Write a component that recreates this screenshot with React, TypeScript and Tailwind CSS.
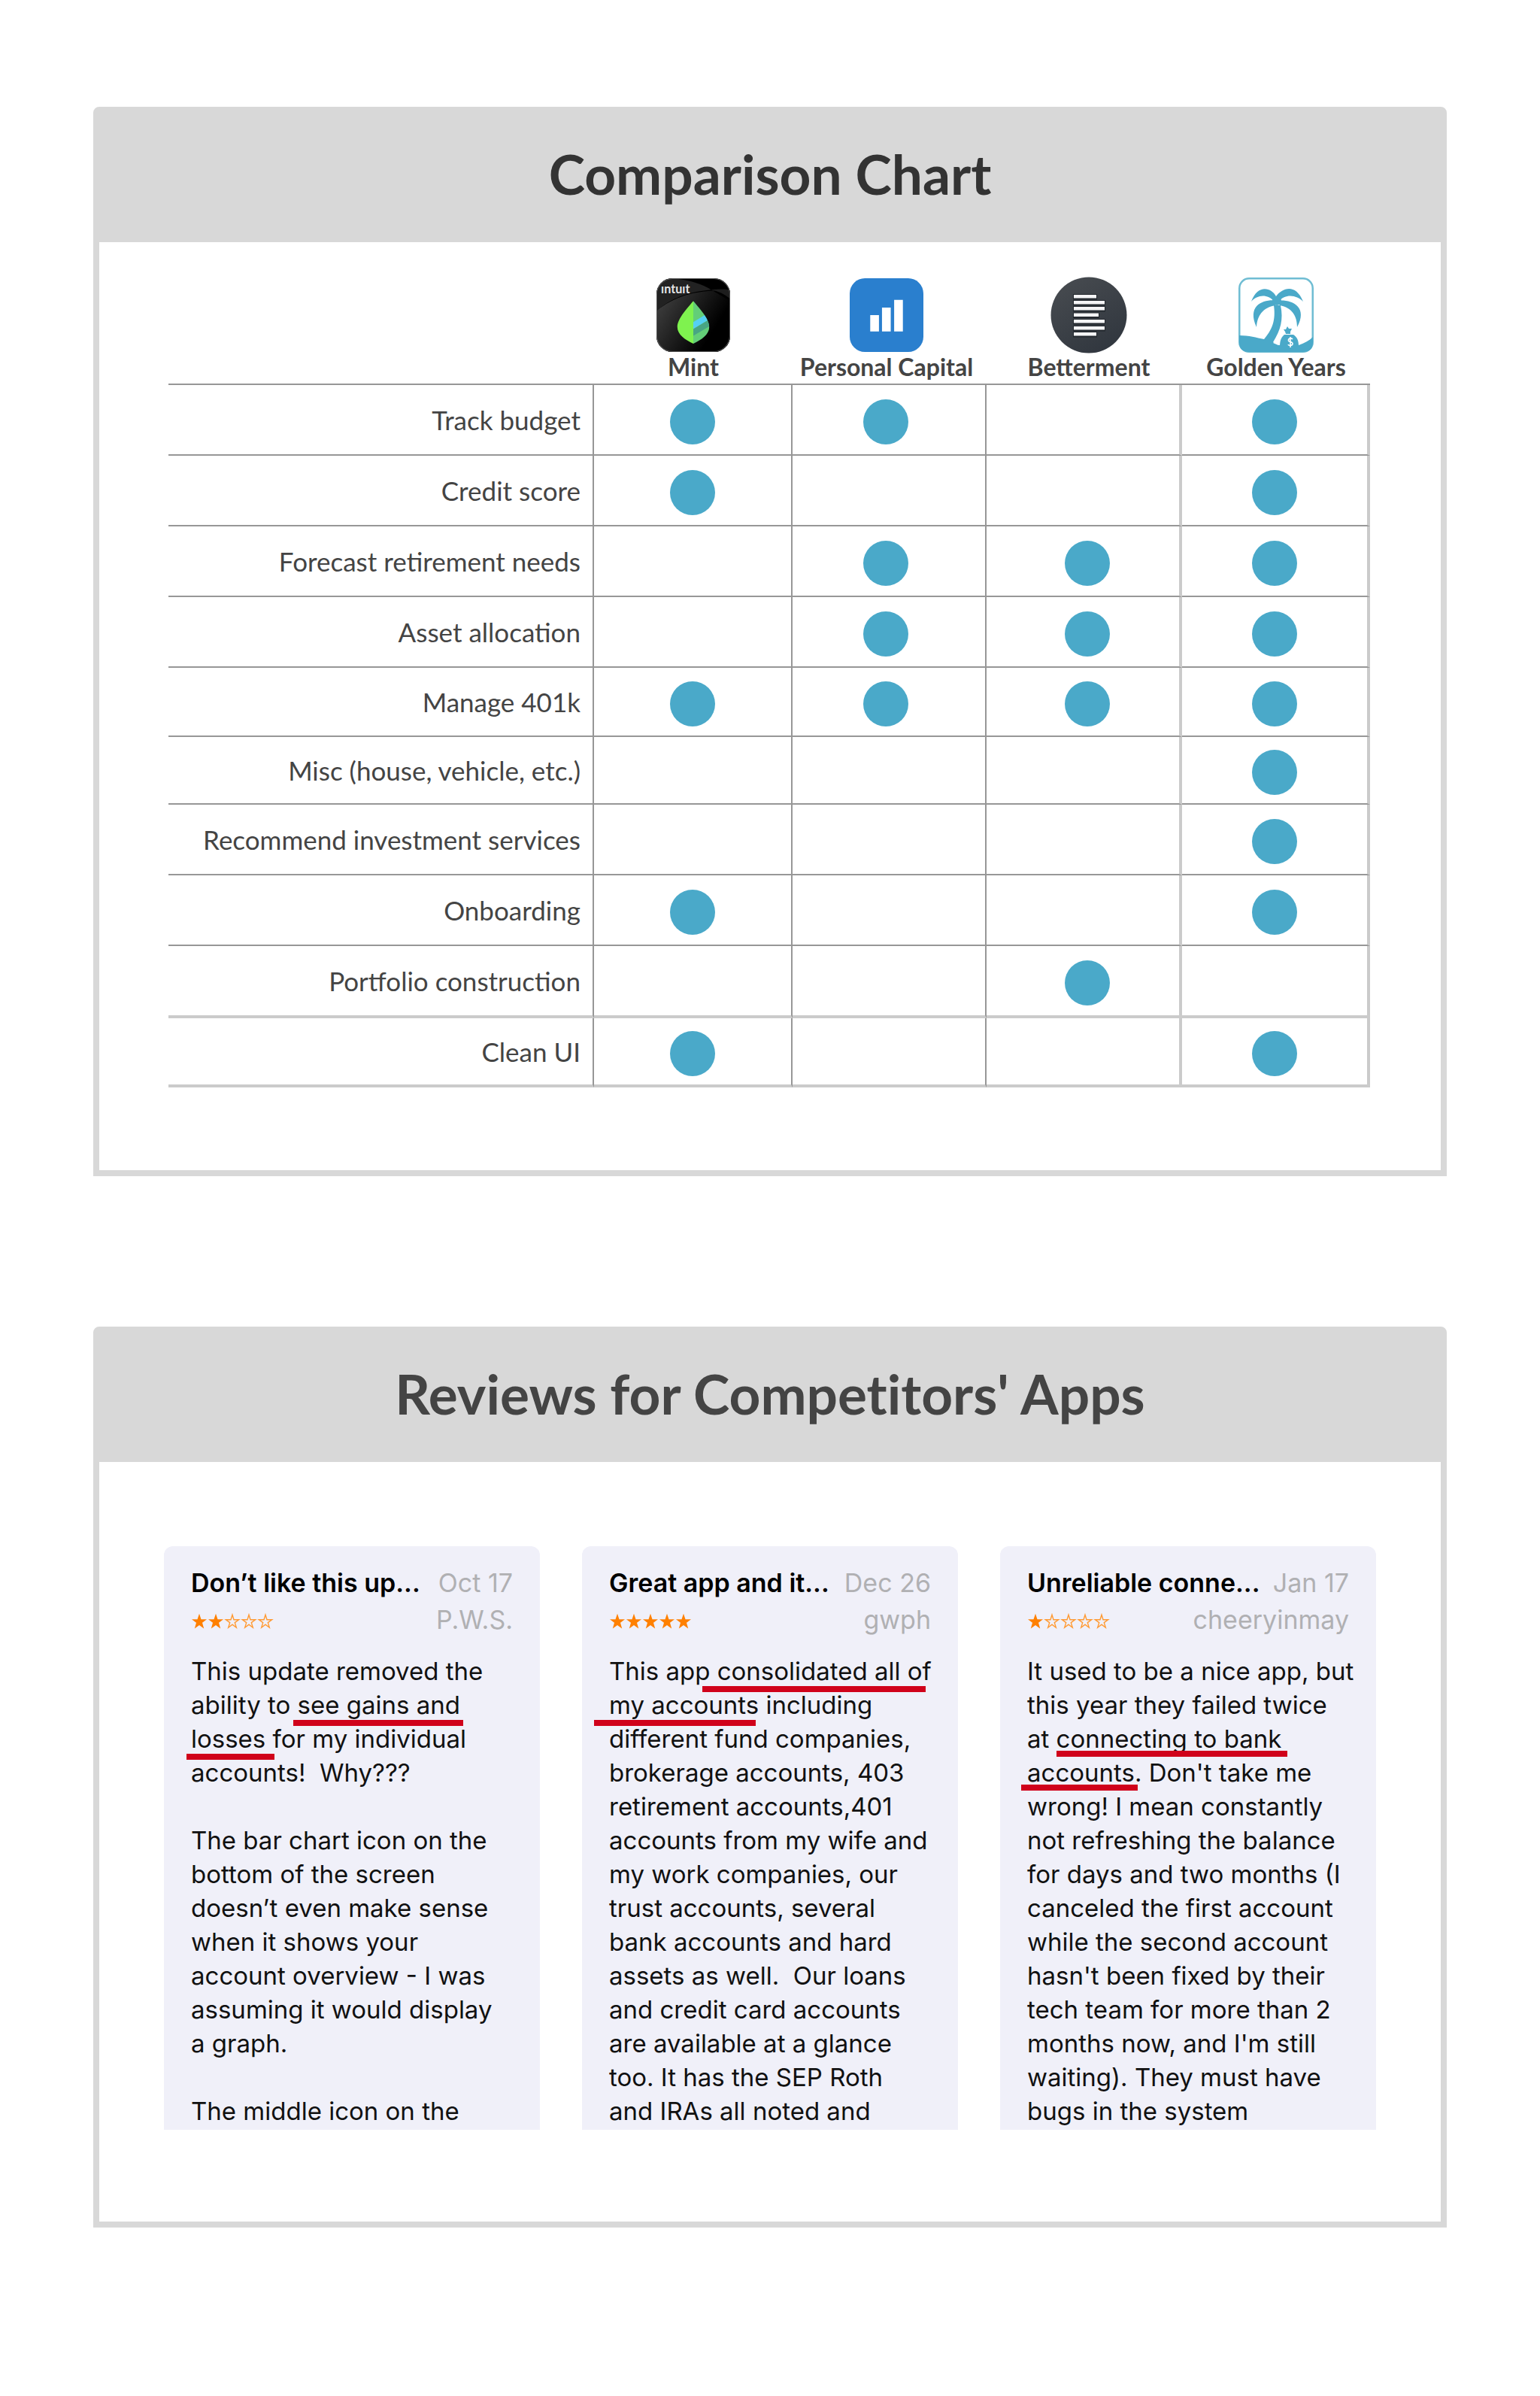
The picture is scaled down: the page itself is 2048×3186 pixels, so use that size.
import type { ReactNode } from "react";

function MintIcon() {
  return (
    <svg width="98" height="98" viewBox="0 0 97 97" role="img" aria-label="Mint logo">
      <defs>
        <linearGradient id="mint-sheen" x1="0" y1="0.3" x2="0.75" y2="0.7">
          <stop offset="0" stopColor="#3c3c3c" />
          <stop offset="1" stopColor="#000" />
        </linearGradient>
        <clipPath id="mint-leaf">
          <path d="M48.5 30C55 38 69.5 53 69.5 64C69.5 74 59 81 48.5 86Z" />
        </clipPath>
        <clipPath id="mint-tile">
          <rect width="97" height="97" rx="21" />
        </clipPath>
      </defs>
      <g clipPath="url(#mint-tile)">
        <rect width="97" height="97" fill="#000" />
        <path d="M0 0H20C45 2 60 8 72 15C40 18 20 26 0 43Z" fill="#222" />
        <path d="M0 43C24 24 50 15 97 16V27C92 22 84 16 72 15L97 30V97H0Z" fill="url(#mint-sheen)" />
        <path d="M72 15C80 14 90 14 97 15V27C90 21 82 17 72 15Z" fill="#1d1d1d" />
      </g>
      <rect x="0.5" y="0.5" width="96" height="96" rx="21" fill="none" stroke="#555" />
      <text x="6" y="20" fontSize="16" fontWeight="700" fill="#e6e6e6" className="font-['Lato',sans-serif]">
        ıntuıt
      </text>
      <path d="M48.5 30C42 38 27.5 53 27.5 64C27.5 74 38 81 48.5 86Z" fill="#7ff24f" />
      <g clipPath="url(#mint-leaf)">
        <rect x="48" y="28" width="24" height="60" fill="#63ce78" />
        <path d="M48 58L66 47L70 54L48 67Z" fill="#55d0f3" />
        <path d="M48 67L70 54V63L48 76Z" fill="#48a583" />
      </g>
    </svg>
  );
}

function PersonalCapitalIcon() {
  return (
    <svg width="98" height="98" viewBox="0 0 97 97" role="img" aria-label="Personal Capital logo">
      <rect width="97" height="97" rx="20" fill="#2a7fce" />
      <path d="M27 48.5H38.5V70H27ZM42.5 38.5H54V70H42.5ZM58.5 28.5H70V70H58.5Z" fill="#fff" />
    </svg>
  );
}

const bettermentBars = [
  [24, 30],
  [32, 41],
  [40, 41],
  [48.5, 33],
  [57, 41],
  [66, 41],
  [74, 30],
];

function BettermentIcon() {
  return (
    <svg width="102" height="102" viewBox="0 0 102 102" role="img" aria-label="Betterment logo">
      <defs>
        <linearGradient id="betterment-fill" x1="0.2" y1="0" x2="0.8" y2="1">
          <stop offset="0" stopColor="#474b50" />
          <stop offset="1" stopColor="#30363e" />
        </linearGradient>
      </defs>
      <circle cx="51" cy="51" r="50.5" fill="url(#betterment-fill)" />
      {bettermentBars.map(([y, w]) => (
        <g key={y}>
          <rect x="30" y={y - 1} width={w + 2} height="7.5" fill="#23282e" />
          <rect x="31" y={y} width={w} height="4.5" fill="#f4f4f6" />
        </g>
      ))}
    </svg>
  );
}

function GoldenYearsIcon() {
  return (
    <svg width="100" height="100" viewBox="0 0 100 100" role="img" aria-label="Golden Years logo">
      <rect x="1.25" y="1.25" width="97.5" height="97.5" rx="13" fill="#fff" stroke="#6fbdd3" strokeWidth="2.5" />
      <g fill="#4aa9c9">
        <path d="M1 77C14 77 24 80 34 82C48 66 49 52 47 37H56C60 56 56 70 46 86L54 90H80C88 87 94 84 99 79V86Q99 99 86 99H14Q1 99 1 86Z" />
        <path d="M50 25C44 14 26 8 17 32C25 23 38 21 48 32Z" />
        <path d="M50 25C58 14 76 7 86 32C77 23 63 21 53 32Z" />
        <path d="M53 31C36 28 10 35 24 66C25 51 32 40 49 37Z" />
        <path d="M50 31C68 28 94 37 78 66C78 51 71 40 55 37Z" />
        <circle cx="51" cy="31" r="6" />
      </g>
      <path d="M46 87L53 90L58 81Z" fill="#fff" />
      <g fill="#4aa9c9">
        <path d="M61 76H73C78 79 80 84 80 91H55C55 84 57 79 61 76Z" />
        <path d="M65 65L67 68L71 68L69 72L69 75H63L62 72L60 69L63 69Z" />
      </g>
      <path
        d="M72 82C70 80 66 81 66.500 84C67 86 72 85 72 88C72 91 67 91 66 89M69 79V93"
        fill="none"
        stroke="#fff"
        strokeWidth="1.6"
      />
    </svg>
  );
}

/* Inner padding that positions each product column's header and dots. */
const products = [
  { name: "Mint", icon: <MintIcon />, pad: "", width: "w-[264px]", edge: "border-r-2 border-r-[#979797]" },
  { name: "Personal Capital", icon: <PersonalCapitalIcon />, pad: "pr-2", width: "w-[258px]", edge: "border-r-2 border-r-[#979797]" },
  { name: "Betterment", icon: <BettermentIcon />, pad: "pl-3", width: "w-[260px]", edge: "border-r-4 border-r-[#cbcbcb]" },
  { name: "Golden Years", icon: <GoldenYearsIcon />, pad: "", width: "w-[250px]", edge: "border-r-4 border-r-[#cbcbcb]" },
];

const darkRule = "border-b-2 border-b-[#979797]";
const lightRule = "border-b-4 border-b-[#cbcbcb]";

const features = [
  { name: "Track budget", has: [true, true, false, true], height: "h-[94px]", rule: darkRule },
  { name: "Credit score", has: [true, false, false, true], height: "h-[94px]", rule: darkRule },
  { name: "Forecast retirement needs", has: [false, true, true, true], height: "h-[94px]", rule: darkRule },
  { name: "Asset allocation", has: [false, true, true, true], height: "h-[94px]", rule: darkRule },
  { name: "Manage 401k", has: [true, true, true, true], height: "h-[92px]", rule: darkRule },
  { name: "Misc (house, vehicle, etc.)", has: [false, false, false, true], height: "h-[90px]", rule: darkRule },
  { name: "Recommend investment services", has: [false, false, false, true], height: "h-[94px]", rule: darkRule },
  { name: "Onboarding", has: [true, false, false, true], height: "h-[94px]", rule: darkRule },
  { name: "Portfolio construction", has: [false, false, true, false], height: "h-[96px]", rule: lightRule },
  { name: "Clean UI", has: [true, false, false, true], height: "h-[92px]", rule: lightRule },
];

function ComparisonTable() {
  return (
    <table className="w-full table-fixed border-separate border-spacing-0 font-['Lato',sans-serif] text-[#444]">
      <colgroup>
        <col className="w-[566px]" />
        {products.map((p) => (
          <col key={p.name} className={p.width} />
        ))}
      </colgroup>
      <thead>
        <tr>
          <td className={darkRule} />
          {products.map((p) => (
            <th key={p.name} scope="col" className={`pt-[46px] pb-1 align-top font-bold ${darkRule} ${p.pad}`}>
              <div className="flex h-[102px] items-center justify-center">{p.icon}</div>
              <div className="text-[32px] leading-9 whitespace-nowrap">{p.name}</div>
            </th>
          ))}
        </tr>
      </thead>
      <tbody>
        {features.map((f) => (
          <tr key={f.name} className={f.height}>
            <th
              scope="row"
              className={`border-r-2 border-r-[#979797] pr-4 text-right text-[35px] leading-10 font-normal whitespace-nowrap ${f.rule}`}
            >
              {f.name}
            </th>
            {products.map((p, i) => (
              <td key={p.name} className={`pt-1.5 ${p.pad} ${p.edge} ${f.rule}`}>
                {f.has[i] && (
                  <div role="img" aria-label="Yes" className="mx-auto size-[60px] rounded-full bg-[#4aa9c9]" />
                )}
              </td>
            ))}
          </tr>
        ))}
      </tbody>
    </table>
  );
}

function Star({ filled }: { filled: boolean }) {
  return (
    <svg width="22" height="22" viewBox="0 0 22 22" aria-hidden="true">
      <path
        d={
          filled
            ? "M11 0.8L13.500 8.200H21L15 12.800L17.200 20.500L11 15.900L4.800 20.500L7 12.800L1 8.200H8.500Z"
            : "M11 2.200L13 8.800H19.600L14.300 12.600L16.300 19.200L11 15.200L5.700 19.200L7.700 12.600L2.400 8.800H9Z"
        }
        fill={filled ? "#ff8000" : "none"}
        stroke={filled ? "none" : "#ff9a33"}
        strokeWidth="1.4"
      />
    </svg>
  );
}

/* Text with a thick red marker line; `bar` sets how far the line reaches past the words. */
function Marked({ bar, children }: { bar: string; children: ReactNode }) {
  return (
    <mark className="relative bg-transparent text-inherit">
      {children}
      <span className={`absolute h-2 bg-[#d0021b] ${bar}`} />
    </mark>
  );
}

type Review = { title: string; date: string; author: string; stars: number; lines: ReactNode[] };

const reviews: Review[] = [
  {
    title: "Don’t like this up...",
    date: "Oct 17",
    author: "P.W.S.",
    stars: 2,
    lines: [
      "This update removed the",
      <>ability to <Marked bar="-bottom-2 -left-1.5 -right-1">see gains and</Marked></>,
      <><Marked bar="-bottom-2 -left-1.5 -right-3">losses</Marked> for my individual</>,
      "accounts!  Why???",
      " ",
      "The bar chart icon on the",
      "bottom of the screen",
      "doesn’t even make sense",
      "when it shows your",
      "account overview - I was",
      "assuming it would display",
      "a graph.",
      " ",
      "The middle icon on the",
    ],
  },
  {
    title: "Great app and it...",
    date: "Dec 26",
    author: "gwph",
    stars: 5,
    lines: [
      <>This app <Marked bar="-bottom-2 -left-5 right-2">consolidated all of</Marked></>,
      <><Marked bar="-bottom-2 -left-5 right-1">my accounts</Marked> including</>,
      "different fund companies,",
      "brokerage accounts, 403",
      "retirement accounts,401",
      "accounts from my wife and",
      "my work companies, our",
      "trust accounts, several",
      "bank accounts and hard",
      "assets as well.  Our loans",
      "and credit card accounts",
      "are available at a glance",
      "too. It has the SEP Roth",
      "and IRAs all noted and",
    ],
  },
  {
    title: "Unreliable conne...",
    date: "Jan 17",
    author: "cheeryinmay",
    stars: 1,
    lines: [
      "It used to be a nice app, but",
      "this year they failed twice",
      <>at <Marked bar="-bottom-1 left-0 -right-2">connecting to bank</Marked></>,
      <><Marked bar="-bottom-1 -left-2 -right-1">accounts</Marked>. Don't take me</>,
      "wrong! I mean constantly",
      "not refreshing the balance",
      "for days and two months (I",
      "canceled the first account",
      "while the second account",
      "hasn't been fixed by their",
      "tech team for more than 2",
      "months now, and I'm still",
      "waiting). They must have",
      "bugs in the system",
    ],
  },
];

function ReviewCard({ review }: { review: Review }) {
  return (
    <article className="rounded-t-xl bg-[#f0f0f9] px-9 pt-[26px] pb-0.5 font-['Inter',sans-serif] text-[34px] leading-[45px] text-[#111]">
      <div className="flex justify-between whitespace-nowrap">
        <h3 className="font-semibold text-black">{review.title}</h3>
        <span className="text-[#b0b0b3]">{review.date}</span>
      </div>
      <div className="mt-1 flex items-center justify-between">
        <div role="img" aria-label={`${review.stars} out of 5 stars`} className="flex pt-1">
          {[1, 2, 3, 4, 5].map((n) => (
            <Star key={n} filled={n <= review.stars} />
          ))}
        </div>
        <span className="text-[#b0b0b3]">{review.author}</span>
      </div>
      <p className="mt-6 text-[33px] leading-[45px] whitespace-pre">
        {review.lines.map((line, i) => (
          <span key={i} className="block">
            {line}
          </span>
        ))}
      </p>
    </article>
  );
}

function Panel({ title, tone, children }: { title: string; tone: string; children: ReactNode }) {
  return (
    <section className="rounded-t-lg border-8 border-[#d8d8d8] bg-white">
      <h2
        className={`bg-[#d8d8d8] pt-[38px] pb-12 text-center font-['Lato',sans-serif] text-[73px] leading-[86px] font-bold [font-variant-ligatures:none] ${tone}`}
      >
        {title}
      </h2>
      {children}
    </section>
  );
}

export default function App() {
  return (
    <main className="flex flex-col gap-[200px] bg-white px-[124px] pt-[142px] pb-[224px]">
      <Panel title="Comparison Chart" tone="text-[#333]">
        <div className="pr-[94px] pb-[110px] pl-[92px]">
          <ComparisonTable />
        </div>
      </Panel>
      <Panel title="Reviews for Competitors' Apps" tone="text-[#444]">
        <div className="grid grid-cols-3 gap-14 px-[86px] pt-28 pb-[122px]">
          {reviews.map((r) => (
            <ReviewCard key={r.title} review={r} />
          ))}
        </div>
      </Panel>
    </main>
  );
}
